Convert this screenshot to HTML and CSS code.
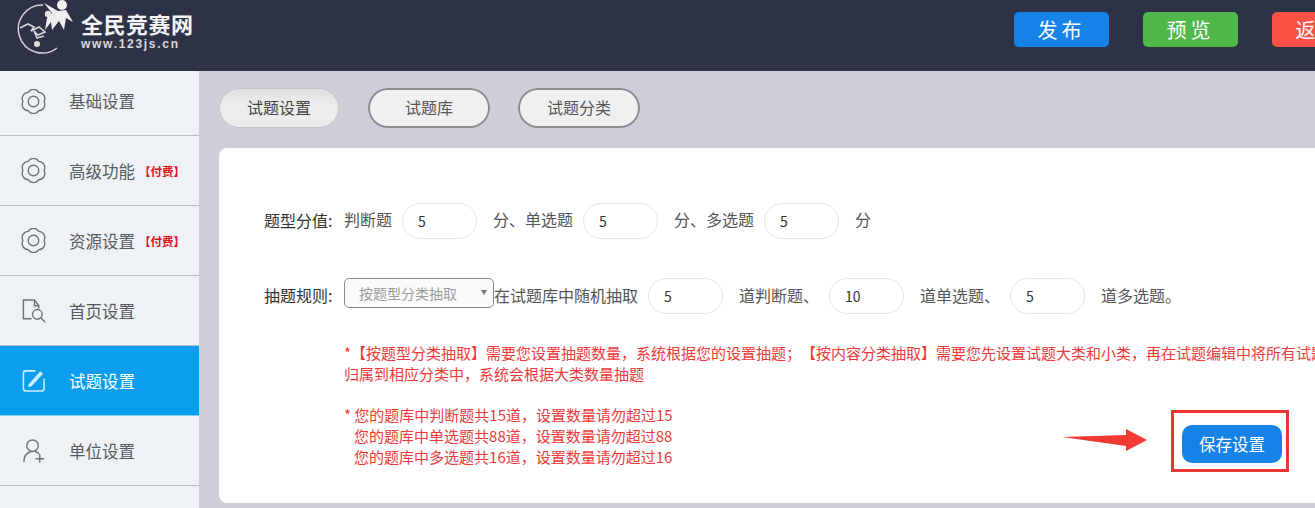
FILE: index.html
```html
<!DOCTYPE html>
<html lang="zh-CN">
<head>
  <meta charset="UTF-8">
  <title>试题设置</title>
  <link rel="stylesheet" href="styles.css">
</head>
<body>
  <svg class="defs" width="0" height="0">
    <symbol id="ico-gear" viewBox="0 0 26 26">
      <path d="M24 13A6.500 6.500 0 0 1 18.500 22.530A6.500 6.500 0 0 1 7.500 22.530A6.500 6.500 0 0 1 2 13A6.500 6.500 0 0 1 7.500 3.470A6.500 6.500 0 0 1 18.500 3.470A6.500 6.500 0 0 1 24 13Z" fill="none" stroke="currentColor" stroke-width="1.4"/>
      <circle cx="13" cy="13" r="5.500" fill="none" stroke="currentColor" stroke-width="1.4"/>
    </symbol>
  </svg>

  <div class="pagina">
    <!-- Cabecera -->
    <header class="cabecera">
      <div class="logo">
        <svg class="logo-img" width="64" height="56" viewBox="0 0 64 56">
          <path d="M29 5A24 24 0 1 0 43 48" fill="none" stroke="#cfd0d6" stroke-width="1.5"/>
          <circle cx="48" cy="5" r="5" fill="#f2f2f2"/>
          <circle cx="34" cy="14" r="3.200" fill="#e4e4e4"/>
          <path d="M30 3L44 11L52 10L59 22L52 18L50 30L45 21L38 30L37 22L31 30L33 18L38 13Z" fill="#eeeeee"/>
          <path d="M6 28L14 24L20 27L17 31L25 27L31 32L24 35L20 31L23 38L30 36" fill="none" stroke="#d8d8dc" stroke-width="1.6"/>
          <circle cx="23" cy="44" r="3" fill="#e0e0e0"/>
        </svg>
        <div class="logo-texto">
          <div class="logo-nombre">全民竞赛网</div>
          <div class="logo-web">www.123js.cn</div>
        </div>
      </div>
      <div class="acciones">
        <button class="btn-top azul">发布</button>
        <button class="btn-top verde">预览</button>
        <button class="btn-top rojo">返回</button>
      </div>
    </header>

    <div class="cuerpo">
      <!-- Menu lateral -->
      <nav class="menu">
        <a class="menu-item">
          <svg class="menu-ico" viewBox="0 0 26 26"><use href="#ico-gear"/></svg>
          <span>基础设置</span>
        </a>
        <a class="menu-item">
          <svg class="menu-ico" viewBox="0 0 26 26"><use href="#ico-gear"/></svg>
          <span>高级功能</span><em class="pago">【付费】</em>
        </a>
        <a class="menu-item">
          <svg class="menu-ico" viewBox="0 0 26 26"><use href="#ico-gear"/></svg>
          <span>资源设置</span><em class="pago">【付费】</em>
        </a>
        <a class="menu-item">
          <svg class="menu-ico" viewBox="0 0 26 26" fill="none" stroke="currentColor" stroke-width="1.5">
            <path d="M11 21.500H2.500V2H14L18.500 8V11"/>
            <path d="M14 2V8H18.500"/>
            <circle cx="17" cy="17" r="5"/>
            <path d="M20.500 20.500L25 25"/>
          </svg>
          <span>首页设置</span>
        </a>
        <a class="menu-item activo">
          <svg class="menu-ico" viewBox="0 0 26 26" fill="none" stroke="currentColor" stroke-width="1.6">
            <path d="M15 3H5Q2.500 3 2.500 5.500V21Q2.500 24 5.500 24H21Q24 24 24 21V11"/>
            <path d="M8 17L20 3.500L23 6L11 19L7.500 20Z" fill="currentColor" stroke="none"/>
          </svg>
          <span>试题设置</span>
        </a>
        <a class="menu-item">
          <svg class="menu-ico" viewBox="0 0 26 26" fill="none" stroke="currentColor" stroke-width="1.5">
            <circle cx="12" cy="8" r="6"/>
            <path d="M3 25Q3 16 10 14.500M14.500 14Q17 14.500 19 16.500"/>
            <path d="M15 21.500H24M19.500 17V25.500"/>
          </svg>
          <span>单位设置</span>
        </a>
      </nav>

      <!-- Contenido -->
      <main class="contenido">
        <div class="pestanas">
          <button class="pestana activa">试题设置</button>
          <button class="pestana">试题库</button>
          <button class="pestana">试题分类</button>
        </div>

        <section class="tarjeta">
          <div class="fila fila-valor">
            <label class="etiqueta">题型分值:</label>
            <span>判断题</span>
            <input class="campo" value="5">
            <span>分、单选题</span>
            <input class="campo" value="5">
            <span>分、多选题</span>
            <input class="campo" value="5">
            <span>分</span>
          </div>

          <div class="fila fila-regla">
            <label class="etiqueta">抽题规则:</label>
            <div class="selector">按题型分类抽取<i class="flecha"></i></div>
            <span class="pegado">在试题库中随机抽取</span>
            <input class="campo" value="5">
            <span>道判断题、</span>
            <input class="campo" value="10">
            <span>道单选题、</span>
            <input class="campo" value="5">
            <span>道多选题。</span>
          </div>

          <p class="aviso">*【按题型分类抽取】需要您设置抽题数量，系统根据您的设置抽题；【按内容分类抽取】需要您先设置试题大类和小类，再在试题编辑中将所有试题<br>归属到相应分类中，系统会根据大类数量抽题</p>

          <div class="pie">
            <p class="aviso limites">* 您的题库中判断题共15道，设置数量请勿超过15<br>&nbsp;&nbsp;&nbsp;您的题库中单选题共88道，设置数量请勿超过88<br>&nbsp;&nbsp;&nbsp;您的题库中多选题共16道，设置数量请勿超过16</p>
            <button class="btn-guardar">保存设置</button>
            <svg class="nota-flecha" width="86" height="22" viewBox="0 0 86 22">
              <path d="M0 8L64 6V0L85 11L64 22V17Z" fill="#f23a32"/>
            </svg>
            <div class="nota-marco"></div>
          </div>
        </section>
      </main>
    </div>
  </div>
</body>
</html>
```

FILE: styles.css
```css
:root {
  --oscuro: #2e3247;
  --azul: #1482e6;
  --rojo: #ee3a3a;
  --fondo: #cfced8;
}
html, body {
  margin: 0;
  height: 508px;
  overflow: hidden;
}
body {
  font-family: "Noto Sans CJK SC", "Noto Sans", sans-serif;
  font-size: 16px;
  color: #444;
  background: var(--fondo);
  text-spacing-trim: space-all;
}
.defs {
  position: absolute;
}
.pagina {
  width: 1420px;
}
/* Cabecera */
.cabecera {
  height: 71px;
  background: var(--oscuro);
  display: flex;
  justify-content: space-between;
  align-items: flex-start;
}
.logo {
  display: flex;
  padding-left: 14px;
}
.logo-texto {
  margin-left: 3px;
  color: #f4f4f4;
}
.logo-nombre {
  font-size: 22px;
  font-weight: 700;
  line-height: 26px;
  margin-top: 10px;
  letter-spacing: 0.5px;
  white-space: nowrap;
}
.logo-web {
  font-family: "Liberation Sans", sans-serif;
  font-size: 12px;
  font-weight: 700;
  line-height: 14px;
  margin-top: 1px;
  letter-spacing: 1.7px;
  color: #d8d9de;
}
.acciones {
  display: flex;
  gap: 34px;
  padding: 12px 53px 0 0;
}
.btn-top {
  width: 95px;
  height: 35px;
  border: none;
  border-radius: 5px;
  color: white;
  font-family: inherit;
  font-size: 20px;
  line-height: 35px;
  letter-spacing: 4px;
  padding: 0;
}
.btn-top.azul { background: var(--azul); }
.btn-top.verde { background: #4fb848; }
.btn-top.rojo { background: #fb5147; }
/* Menu lateral */
.cuerpo {
  display: flex;
  height: 437px;
}
.menu {
  width: 199px;
  flex: none;
  background: #eef2f4;
}
.menu-item {
  height: 69px;
  border-bottom: 1px solid #b9bdc0;
  display: flex;
  align-items: center;
  padding-left: 21px;
  color: #555b61;
  font-size: 16.5px;
}
.menu-item:first-child {
  height: 60px;
  padding-bottom: 4px;
}
.menu-ico {
  width: 25px;
  height: 25px;
  margin-right: 23px;
  flex: none;
  color: #6c7176;
}
.menu-item.activo {
  background: #0b9eef;
  color: white;
  border-bottom: 1px solid #8fcbed;
}
.menu-item.activo .menu-ico {
  color: #cdeeff;
}
.pago {
  font-style: normal;
  font-size: 11.5px;
  font-weight: 700;
  color: #e2101d;
  margin-left: 4px;
}
/* Contenido */
.contenido {
  flex: 1;
  padding: 17px 0 0 20px;
}
.pestanas {
  display: flex;
  gap: 28px;
  height: 40px;
  margin-bottom: 20px;
}
.pestana {
  width: 122px;
  height: 40px;
  border: none;
  border-radius: 20px;
  background: #f0f0f0;
  box-shadow: inset 0 0 0 2px #8c8c90;
  color: #555;
  font-family: inherit;
  font-size: 16px;
  padding: 0 0 2px;
}
.pestana.activa {
  width: 120px;
  margin-right: 1px;
  background: linear-gradient(#dfdfe1, #ececec 40%);
  box-shadow: inset 0 0 0 1px #c4c4c8;
  color: #444;
}
.tarjeta {
  background: white;
  border-radius: 8px;
  height: 355px;
  padding: 55px 0 0 45px;
  box-sizing: border-box;
  overflow: hidden;
  color: #555;
}
.fila {
  display: flex;
  align-items: center;
  height: 36px;
  white-space: nowrap;
}
.fila-valor span {
  margin-right: 10px;
  padding-bottom: 4px;
}
.fila-valor .etiqueta { padding-bottom: 2px; }
.fila-regla { margin-top: 39px; }
.fila-regla span {
  margin-right: 10px;
  padding-bottom: 3px;
}
.fila-regla .etiqueta { padding-bottom: 3px; }
.etiqueta {
  color: #333;
  width: 80px;
  flex: none;
}
.campo {
  width: 75px;
  height: 36px;
  box-sizing: border-box;
  border: 1px solid #e6e6e6;
  border-radius: 18px;
  padding: 0 0 0 15px;
  margin-right: 16px;
  font-family: inherit;
  font-size: 14px;
  color: #333;
  background: white;
}
.selector {
  position: relative;
  align-self: flex-start;
  width: 150px;
  height: 30px;
  box-sizing: border-box;
  border: 1px solid #8b8b8b;
  border-radius: 5px;
  background: #fafafa;
  color: #9b9b9b;
  font-size: 14px;
  line-height: 28px;
  padding-left: 14px;
}
.flecha {
  position: absolute;
  right: 6px;
  top: 11px;
  border-left: 3px solid transparent;
  border-right: 3px solid transparent;
  border-top: 5px solid #777;
}
.aviso {
  margin: 0;
  color: var(--rojo);
  font-size: 15px;
  line-height: 21px;
  white-space: nowrap;
}
.tarjeta > .aviso {
  margin: 28px 0 0 80px;
}
.pie {
  position: relative;
  display: flex;
  margin: 20px 0 0 80px;
}
.limites {
  width: 838px;
  flex: none;
}
.btn-guardar {
  width: 100px;
  height: 38px;
  flex: none;
  margin-top: 21px;
  border: none;
  border-radius: 10px;
  background: var(--azul);
  color: white;
  font-family: inherit;
  font-size: 16.5px;
  padding: 0;
}
/* Anotaciones sobre la captura */
.nota-flecha {
  position: absolute;
  left: 718px;
  top: 25px;
}
.nota-marco {
  position: absolute;
  left: 827px;
  top: 6px;
  width: 118px;
  height: 62px;
  box-sizing: border-box;
  border: 3px solid #e93535;
}
```
